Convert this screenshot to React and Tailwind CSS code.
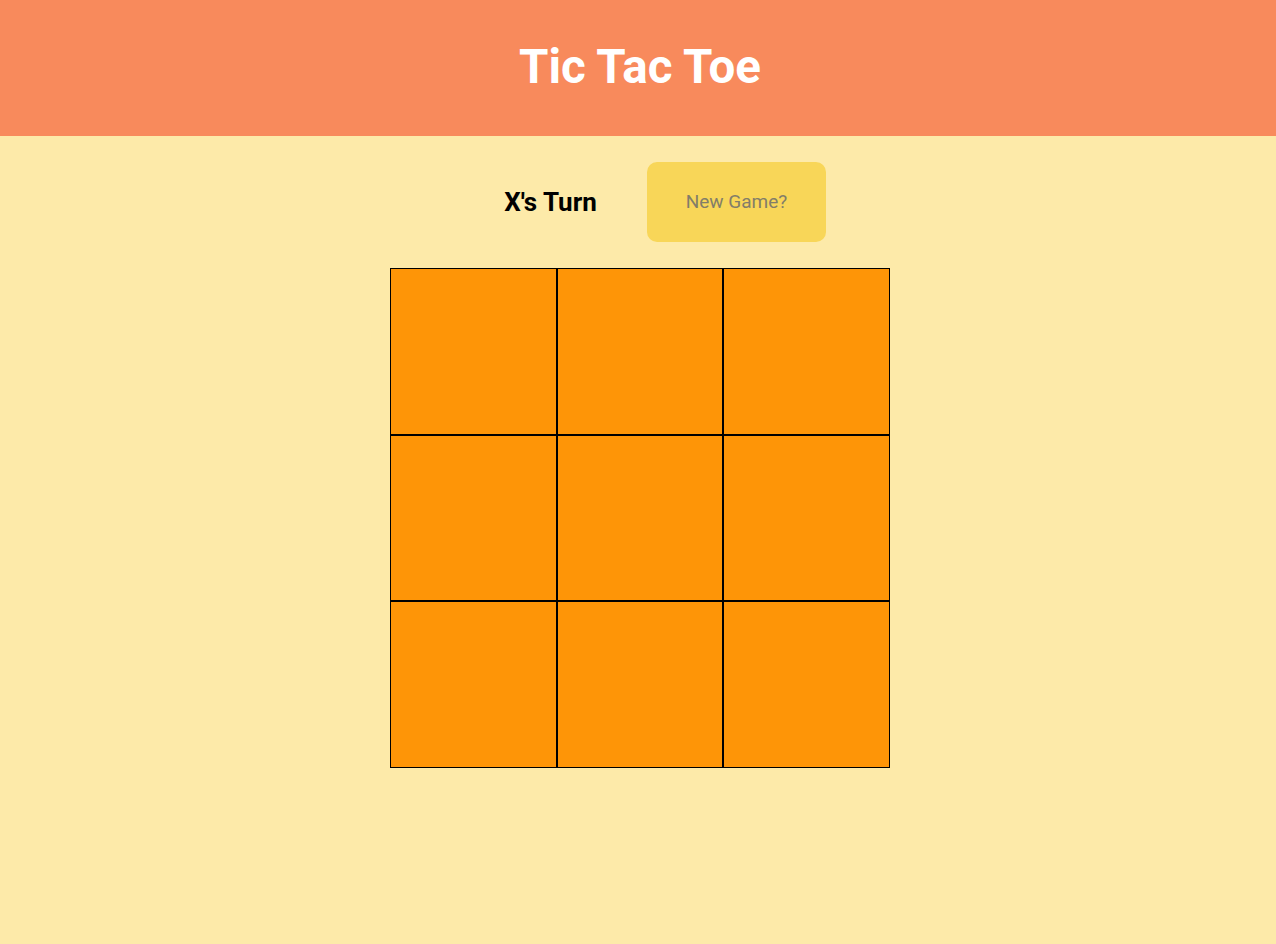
import React, { useState } from 'react';

export default function App() {
  const [cells] = useState(Array(9).fill(null));

  return (
    <div className="min-h-screen bg-[#fdeaa9] font-['Roboto',sans-serif] pl-[4px]">
      {/* Header */}
      <header className="-ml-[4px] pl-[4px] h-[136px] bg-[#f88a5c] flex items-center justify-center">
        <h1 className="text-white text-[47.5px] font-bold leading-none">Tic Tac Toe</h1>
      </header>

      {/* Status row */}
      <div className="flex justify-center items-center mt-[26px]">
        <div className="w-[193px] text-center text-[26px] font-bold text-black">X's Turn</div>
        <button
          type="button"
          className="w-[179px] h-[80px] rounded-[10px] bg-[#f8d658] text-[#827d69] text-[19px]"
        >
          New Game?
        </button>
      </div>

      {/* Board */}
      <div className="flex justify-center mt-[26px]">
        <div className="grid grid-cols-3 w-[500px]">
          {cells.map((c, i) => (
            <div key={i} className="h-[166.67px] bg-[#fe9507] border border-black" />
          ))}
        </div>
      </div>
    </div>
  );
}
